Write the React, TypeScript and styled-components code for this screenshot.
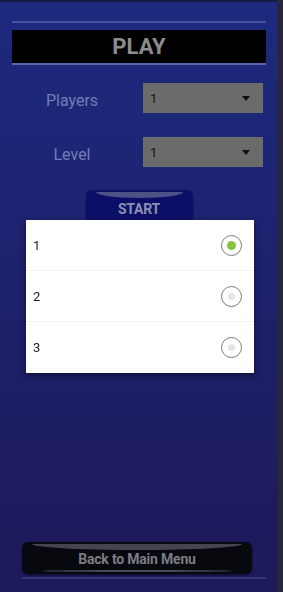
import React from "react";
import styled, { createGlobalStyle } from "styled-components";

const GlobalStyle = createGlobalStyle`
  html, body { margin: 0; padding: 0; height: 100%; }
  body { font-family: Roboto, "Noto Sans", sans-serif; }
  #root { height: 100%; }
`;

const Screen = styled.div`
  display: flex;
  width: 100vw;
  height: 592px;
  overflow: hidden;
`;

const Main = styled.div`
  flex: 1;
  display: flex;
  flex-direction: column;
  padding: 0 11px 0 12px;
  border-top: 2px solid #151a45;
  background: linear-gradient(180deg, #1d2a7e 0%, #1d2472 35%, #1d1d62 70%, #1d1a5a 100%);
`;

const EdgeStrip = styled.div`
  width: 6px;
  background: #26263e;
`;

const Rule = styled.div<{ $top: number; $inset?: number; $color: string }>`
  height: 2px;
  margin-top: ${(p) => p.$top}px;
  margin-left: ${(p) => p.$inset ?? 0}px;
  background: ${(p) => p.$color};
`;

const TitleBar = styled.div`
  margin-top: 7px;
  height: 33px;
  background: #000;
  border-bottom: 2px solid #5b6aa6;
  display: flex;
  align-items: center;
  justify-content: center;
`;

const Title = styled.h1`
  margin: 0;
  font-size: 22px;
  font-weight: 700;
  color: #8c8c8c;
`;

const FormRow = styled.div<{ $top: number }>`
  display: flex;
  align-items: center;
  margin-top: ${(p) => p.$top}px;
`;

const Label = styled.span`
  width: 120px;
  padding-top: 4px;
  text-align: center;
  font-size: 16px;
  color: #737eb6;
`;

const Select = styled.div`
  margin-left: 11px;
  width: 120px;
  height: 30px;
  box-sizing: border-box;
  background: #6b6b6b;
  display: flex;
  align-items: center;
  justify-content: space-between;
  padding: 0 13px 0 7px;
  font-size: 13px;
  color: #151515;
`;

const Caret = styled.span`
  width: 0;
  height: 0;
  border-left: 4px solid transparent;
  border-right: 4px solid transparent;
  border-top: 5px solid #111;
`;

const GlossButton = styled.button<{ $width: number; $bg: string; $shine: string; $color: string; $size: number; $pad: number }>`
  position: relative;
  width: ${(p) => p.$width}px;
  height: 32px;
  border: none;
  border-radius: 6px;
  background: ${(p) => p.$bg};
  color: ${(p) => p.$color};
  font-family: Roboto, "Noto Sans", sans-serif;
  font-size: ${(p) => p.$size}px;
  font-weight: 700;
  letter-spacing: -0.2px;
  padding: ${(p) => p.$pad}px 0 0;
  box-shadow: 0 1px 2px rgba(0, 0, 0, 0.6);
  &::before {
    content: "";
    position: absolute;
    left: 10px;
    right: 10px;
    top: 2px;
    height: 6px;
    border-radius: 0 0 50% 50% / 0 0 100% 100%;
    background: ${(p) => p.$shine};
  }
`;

const StartWrap = styled.div`
  margin-top: 23px;
  display: flex;
  justify-content: center;
`;

const Spacer = styled.div`
  flex: 1;
`;

const BackWrap = styled.div`
  padding-left: 10px;
  display: flex;
`;

const BackButton = styled(GlossButton)`
  &::after {
    content: "";
    position: absolute;
    left: 20px;
    right: 20px;
    bottom: 2px;
    height: 2px;
    border-radius: 50%;
    background: #4a4a58;
  }
`;

const BottomGap = styled.div`
  height: 13px;
`;

const Dialog = styled.div`
  position: fixed;
  left: 26px;
  top: 220px;
  width: 228px;
  background: #fff;
  padding: 1px 0;
  box-shadow: 0 2px 6px rgba(0, 0, 0, 0.5);
`;

const Option = styled.div<{ $last?: boolean }>`
  height: 50px;
  display: flex;
  align-items: center;
  justify-content: space-between;
  padding: 0 12px 0 7px;
  font-size: 13px;
  color: #222;
  border-bottom: ${(p) => (p.$last ? "none" : "1px solid #f2f2f2")};
  box-sizing: border-box;
  &:nth-child(2) { height: 51px; }
`;

const Radio = styled.span<{ $checked: boolean }>`
  width: 21px;
  height: 21px;
  box-sizing: border-box;
  border-radius: 50%;
  border: 1.5px solid #7a7a7a;
  display: flex;
  align-items: center;
  justify-content: center;
  &::after {
    content: "";
    width: ${(p) => (p.$checked ? 9 : 7)}px;
    height: ${(p) => (p.$checked ? 9 : 7)}px;
    border-radius: 50%;
    background: ${(p) => (p.$checked ? "#86c440" : "#e4e4e4")};
  }
`;

const options = ["1", "2", "3"];

export default function App() {
  return (
    <>
      <GlobalStyle />
      <Screen>
        <Main>
          <Rule $top={19} $color="#45539c" />
          <TitleBar>
            <Title>PLAY</Title>
          </TitleBar>
          <FormRow $top={18}>
            <Label>Players</Label>
            <Select>
              <span>1</span>
              <Caret />
            </Select>
          </FormRow>
          <FormRow $top={24}>
            <Label>Level</Label>
            <Select>
              <span>1</span>
              <Caret />
            </Select>
          </FormRow>
          <StartWrap>
            <GlossButton $width={107} $bg="#0c0f68" $shine="#4e5286" $color="#8c8fae" $size={14} $pad={6}>
              START
            </GlossButton>
          </StartWrap>
          <Spacer />
          <BackWrap>
            <BackButton $width={230} $bg="#08080f" $shine="#45454f" $color="#7c7c84" $size={14} $pad={2}>
              Back to Main Menu
            </BackButton>
          </BackWrap>
          <Rule $top={3} $inset={10} $color="#34357a" />
          <BottomGap />
        </Main>
        <EdgeStrip />
      </Screen>
      <Dialog>
        {options.map((o, i) => (
          <Option key={o} $last={i === options.length - 1}>
            <span>{o}</span>
            <Radio $checked={i === 0} />
          </Option>
        ))}
      </Dialog>
    </>
  );
}
